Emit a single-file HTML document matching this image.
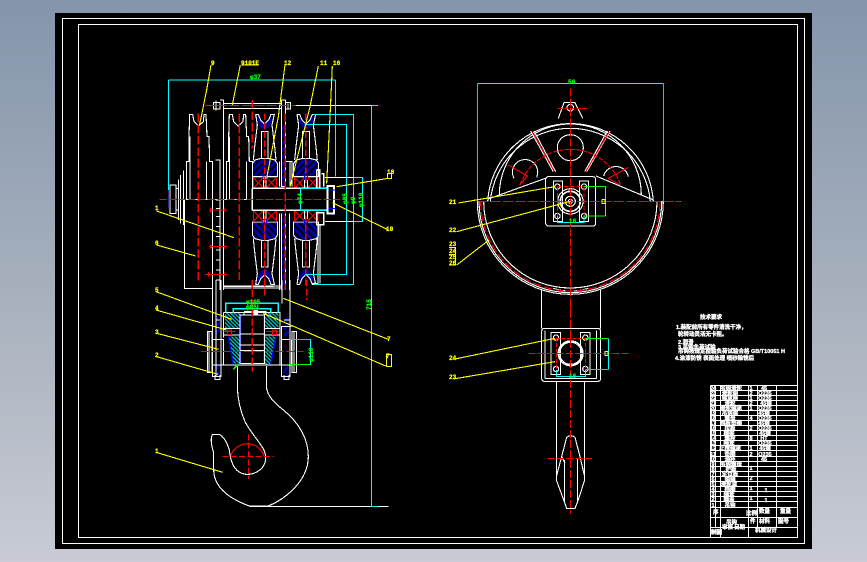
<!DOCTYPE html>
<html><head><meta charset="utf-8"><style>
html,body{margin:0;padding:0;width:867px;height:562px;overflow:hidden;background:linear-gradient(to bottom,#8495ac 0%,#a9b2be 55%,#c8cbd4 100%)}
svg{position:absolute;left:0;top:0}
text{font-family:"Liberation Sans","Noto Sans CJK SC",sans-serif}
.y text{fill:#ff0;stroke:#ff0;stroke-width:.25;font-family:"Liberation Mono",monospace;font-weight:bold;font-size:6px}
text.g{fill:#0f0;stroke:#0f0;stroke-width:.25;font-family:"Liberation Mono",monospace;font-weight:bold;font-size:6px}
.t text{fill:#fff;stroke:#fff;stroke-width:.35;font-size:5.5px;font-weight:bold}
.c text{text-anchor:middle}
</style></head><body>
<svg width="867" height="562" viewBox="0 0 867 562" fill="none" shape-rendering="crispEdges">
<defs>
<pattern id="hb" width="15" height="15" patternUnits="userSpaceOnUse" patternTransform="rotate(45)"><rect width="15" height="15" fill="#000"/><rect width="9" height="15" fill="#00a"/></pattern>
<pattern id="hc" width="8" height="8" patternUnits="userSpaceOnUse" patternTransform="rotate(-45)"><rect width="8" height="8" fill="#000"/><rect width="3.5" height="8" fill="#0bb"/></pattern>
<g id="pu">
<path d="M-19 197L-12 212L0 224L12 212L19 197L22 212L12 232L0 240L-12 232L-22 212Z" fill="#00a"/>
<path d="M-27 193H-19L-12 210L0 222L12 210L19 193H29L22 225L30 290L34 330M-27 193L-22 225L-30 290L-34 330M-10 325V245H10V325" stroke="#fff" stroke-width="3.3"/>
<path d="M-10 325H11L31 330L38 340V380H-37V340L-29 330Z" fill="url(#hb)" stroke="#fff" stroke-width="3.3"/>
<path d="M-34 382H-4V415H-34ZM-34 382L-4 415M-4 382L-34 415M4 382H36V415H4ZM4 382L36 415M36 382L4 415" stroke="#f00" stroke-width="3.3"/>
<path d="M-4 380H4V415H-4Z" stroke="#fff" stroke-width="3.3" fill="#000"/>
<path d="M-5 376H5V388H-5Z" stroke="#00f" stroke-width="3.3"/>
<path d="M0 190V415" stroke="#f00" stroke-width="4.5" stroke-dasharray="20 7"/>
</g>
<g id="pw" stroke="#fff" stroke-width="3.3">
<path d="M0 448V335H7V260L9 193H18L22 215L35 228L50 215L52 193H58L61 260H67L69 335H78V448M10 448V260M60 448V335"/>
</g>
</defs>

<rect x="55" y="13" width="757" height="536" fill="#000"/>
<path d="M62.5 18.5H804.5V543.5H62.5ZM78.5 24.5H797.5V537.5H78.5Z" stroke="#fff"/>

<!-- LEFT VIEW UPPER -->
<g transform="translate(140 50) scale(.33333)">
<use href="#pw" x="140"/>
<use href="#pw" x="259"/>
<path d="M133 448V715H218M133 448H337M218 338V720M226 330H240V720M240 150H250V720M228 450H240M228 475H240M228 500H240M228 530H240M228 560H240M228 600H240M228 630H240M228 660H240M228 690H240" stroke="#fff" stroke-width="3.3"/>
<path d="M250 160H424M250 176H424M250 708H424M250 714H424M467 166H694" stroke="#fff" stroke-width="3.3"/>
<path d="M220 157H240V177H220ZM228 152V182M436 157H452V177H436ZM444 160V175" stroke="#fff" stroke-width="3.3"/>
<path d="M90 405H108V490H90ZM115 388V510M122 375V520M130 362V525M108 415H115M108 480H115" stroke="#fff" stroke-width="3.3"/>
<path d="M88 420V475" stroke="#55f" stroke-width="4.5"/>
<use href="#pu" x="374"/><use href="#pu" x="498"/>
<g transform="translate(0 896) scale(1 -1)"><use href="#pu" x="374"/><use href="#pu" x="498"/></g>
<rect x="424" y="220" width="12" height="190" fill="url(#hb)"/>
<rect x="424" y="490" width="12" height="230" fill="url(#hb)"/>
<path d="M424 150H436V410H424ZM418 410V335M433 335H456V410M450 335V410M424 481H464M418 490V720M424 490V720M436 490V720M448 490V720" stroke="#fff" stroke-width="3.3"/>
<path d="M337 415H560M337 481H560M337 415V481M530 360H540V412M530 360V412M545 372H552V410M530 488H552V525H530Z" stroke="#fff" stroke-width="4.5"/>
<path d="M562 408H582V490H562Z" stroke="#fff" stroke-width="6" fill="#000"/>
<path d="M565 420H585M565 476H585" stroke="#00f" stroke-width="3.3"/>
<path d="M540 700V525M534 525V700H518M250 710H400" stroke="#fff" stroke-width="3.3"/>
<path d="M58 448H600" stroke="#f00" stroke-width="3.3" stroke-dasharray="22 7"/>
<path d="M195 166H465" stroke="#f00" stroke-width="3.3" stroke-dasharray="30 7"/>
<path d="M175 190V695M298 190V690M337 150V295M337 690V720M436 190V720" stroke="#f00" stroke-width="4.5" stroke-dasharray="26 8"/>
<path d="M208 480H262M208 590H262M195 673H262M212 473V487M212 583V597M205 666V680M255 473V487M255 583V597M255 666V680" stroke="#f00" stroke-width="3.3"/>
<rect x="208" y="476" width="8" height="8" fill="#f00"/><rect x="208" y="586" width="8" height="8" fill="#f00"/>
<path d="M85 90H586M85 90V420M586 90V380M694 166V720M694 166H714M520 193H640V703H520M495 224H619V673H495M640 382H668V514H640M481 415V481H560M481 415H562" stroke="#0ff" stroke-width="3.3"/>
<path d="M555 382H640M555 514H640" stroke="#fff" stroke-width="3.3"/>
<g stroke="#ff0" stroke-width="3.3">
<path d="M213 45L200 120L178 228M301 45L277 165M435 45L415 200L380 385M535 48L510 170L450 410M577 48L570 200L560 400M745 385L590 410M745 540L577 458M50 483L282 563M50 585L167 618M305 45H355"/>
</g>
<rect x="742" y="370" width="12" height="16" fill="none" stroke="#ff0" stroke-width="3.3"/>
</g>

<!-- LEFT LOWER -->
<g transform="translate(140 280) scale(.33333)">
<rect x="255" y="97" width="45" height="48" fill="url(#hc)"/><rect x="375" y="97" width="40" height="48" fill="url(#hc)"/>
<path d="M265 170H300V250H280Z" fill="url(#hc)"/><path d="M372 170H408L392 255H372Z" fill="url(#hc)"/>
<rect x="226" y="110" width="14" height="60" fill="url(#hb)"/><rect x="432" y="110" width="14" height="60" fill="url(#hb)"/>
<rect x="226" y="255" width="14" height="40" fill="url(#hb)"/><rect x="432" y="255" width="14" height="40" fill="url(#hb)"/>
<path d="M265 170L280 255M302 100V250M408 170L392 255M372 100V250" stroke="#00f" stroke-width="4.5"/>
<g stroke="#fff" stroke-width="3.3">
<path d="M300 105H373V250H300ZM300 162H373M300 195H373M300 212H373M250 255H425M250 97H420V255M312 97V105M312 95H378V105"/>
<path d="M218 0V290H243V0M228 0V290M426 0V70M450 0V290H425V140M455 140H425M218 178H250V255H218M425 178H455V255H425M250 145H300M375 145H420M250 165H298M375 165H420M250 97V172"/>
<path d="M202 155H216V278H202ZM207 155V278M456 155H470V278H456ZM462 155V278M225 285V298H240V285M432 285V298H447V285M230 120H240M432 120H448"/>
</g>
<path d="M250 155H285M380 155H415" stroke="#f00" stroke-width="3.3"/>
<rect x="262" y="150" width="12" height="14" stroke="#f00" stroke-width="3.3"/><rect x="398" y="150" width="12" height="14" stroke="#f00" stroke-width="3.3"/>
<rect x="340" y="90" width="14" height="14" fill="#fff"/>
<path d="M183 214H490" stroke="#f00" stroke-width="3.3" stroke-dasharray="24 8"/>
<path d="M337 0V275" stroke="#f00" stroke-width="4.5" stroke-dasharray="22 7"/>
<path d="M374 0V50" stroke="#f00" stroke-width="4.5" stroke-dasharray="20 7"/>
<path d="M500 0V60" stroke="#f00" stroke-width="4.5" stroke-dasharray="20 7"/>
<path d="M257 97V70H415V97M280 100V87H392V100" stroke="#0ff" stroke-width="4.5"/>
<path d="M450 178H512V253H450" stroke="#0f0" stroke-width="3.3"/><path d="M512 178V253" stroke="#0ff" stroke-width="3.3"/>
<path d="M280 268L295 252" stroke="#0f0" stroke-width="4.5"/>
<path d="M292 258V320C293 360 300 390 315 425C330 455 355 480 372 510C380 530 378 550 365 565C350 580 325 588 305 580C285 572 272 550 268 510C262 490 250 465 235 463H218C212 470 212 490 220 515L221 570C222 620 265 655 328 678H385C440 655 505 600 505 530C505 480 480 430 430 390C405 370 382 350 379 320V258" stroke="#fff" stroke-width="3.3"/>
<path d="M328 679H746" stroke="#fff" stroke-width="3.3"/>
<path d="M694 0V679" stroke="#0ff" stroke-width="3.3"/>
<path d="M692 679H714" stroke="#0ff" stroke-width="3.3"/>
<path d="M272 529A52 52 0 0 1 372 529" stroke="#f00" stroke-width="3.3"/>
<path d="M325 463V597M247 529H402" stroke="#f00" stroke-width="3.3" stroke-dasharray="18 7"/>
<g stroke="#ff0" stroke-width="3.3">
<path d="M48 35L275 118M48 90L260 150M50 160L236 208M50 230L234 283M48 517L248 577M745 178L430 55M737 258L370 100"/>
</g>
<rect x="739" y="224" width="15" height="36" stroke="#ff0" stroke-width="3.3"/>
</g>

<!-- RIGHT VIEW -->
<g transform="translate(440 70) scale(.33333)">
<g stroke="#fff" stroke-width="3.3">
<path d="M372 98H405L428 145M372 98L355 145"/><circle cx="391" cy="113" r="10"/>
<path d="M143 394A249 249 0 0 1 640 394M151 394A241 241 0 0 1 631 394M178 375A213 213 0 0 1 604 375"/>
<circle cx="391" cy="233" r="39"/>
<path d="M222 325A38 38 0 1 1 290 322M491 318A38 38 0 0 1 565 320"/>
<path d="M272 183L340 305M282 183L347 305M510 183L440 305M502 183L434 305M145 387L316 325M640 390L468 318"/>
<path d="M112 394A279 279 0 0 0 670 394M131 394A260 260 0 0 0 651 394"/>
<path d="M117 394A274 274 0 0 0 665 394"/>
<path d="M112 394H131M651 394H670M340 655Q391 672 445 655"/>
<rect x="317" y="320" width="150" height="148" rx="8" fill="#000"/>
<rect x="340" y="333" width="28" height="122"/><rect x="418" y="333" width="28" height="122"/>
<circle cx="391" cy="394" r="38"/><circle cx="391" cy="394" r="30" stroke-width="5"/><circle cx="391" cy="394" r="15"/><circle cx="391" cy="394" r="6"/>
<circle cx="352" cy="350" r="8"/><circle cx="432" cy="350" r="8"/><circle cx="352" cy="438" r="8"/><circle cx="432" cy="438" r="8"/>
<path d="M305 660V720M481 660V720"/>
</g>
<path d="M277 186L343 305M507 186L437 305" stroke="#f00" stroke-width="3.3"/>
<path d="M240 345A160 160 0 0 1 542 345" stroke="#f00" stroke-width="3.3" stroke-dasharray="14 4"/>
<path d="M205 285L262 318L240 345M565 292L505 325L540 345" stroke="#f00" stroke-width="3.3"/>
<path d="M122 394A269 269 0 0 0 660 394" stroke="#f00" stroke-width="3.3" stroke-dasharray="26 8"/>
<path d="M391 55V720" stroke="#f00" stroke-width="3.3" stroke-dasharray="24 6"/>
<path d="M115 394H725" stroke="#f00" stroke-width="3.3" stroke-dasharray="30 7"/>
<path d="M352 115H443M352 350H432M352 350V438M432 350V438" stroke="#f00" stroke-width="3.3" stroke-dasharray="14 5"/>
<path d="M113 41V394M670 41V394M432 350H496M432 438H496" stroke="#0f0" stroke-width="3.3"/>
<path d="M113 41H670M496 350V438M352 438V457H432V438" stroke="#0ff" stroke-width="3.3"/>
<path d="M55 399L345 350M50 485L391 394M50 585L147 510" stroke="#ff0" stroke-width="3.3"/>
<path d="M27 532H47V585H27M27 553H47" stroke="#ff0" stroke-width="3.3"/>
<rect x="486" y="388" width="9" height="13" stroke="#ff0" stroke-width="3.3"/>
</g>

<g transform="translate(440 300) scale(.33333)">
<g stroke="#fff" stroke-width="3.3">
<path d="M305 0V85M481 0V85"/>
<rect x="305" y="85" width="177" height="159" rx="8" fill="#000"/>
<path d="M315 235H470M315 235V92M470 235V92"/>
<rect x="333" y="97" width="29" height="127"/><rect x="421" y="97" width="29" height="127"/>
<circle cx="392" cy="160" r="37" stroke-width="4.5"/><circle cx="392" cy="160" r="33"/>
<circle cx="348" cy="113" r="8"/><circle cx="436" cy="113" r="8"/><circle cx="348" cy="207" r="8"/><circle cx="436" cy="207" r="8"/>
<path d="M349 244V540L373 605L380 625H405L413 605L434 540V244"/>
<path d="M380 412Q392 402 405 412L420 470L434 530M380 412L365 470L349 530M373 480V605M413 475V605M365 470L375 490"/>
</g>
<path d="M392 0V640" stroke="#f00" stroke-width="3.3" stroke-dasharray="24 6"/>
<path d="M265 160H565M322 475H458" stroke="#f00" stroke-width="3.3" stroke-dasharray="22 6"/>
<path d="M349 113V207M436 113V207M349 115H436" stroke="#f00" stroke-width="3.3" stroke-dasharray="12 4"/>
<path d="M436 115H505M436 208H505" stroke="#0f0" stroke-width="3.3"/>
<path d="M505 115V208M349 210V229H436V210" stroke="#0ff" stroke-width="3.3"/>
<path d="M40 178L345 115M40 237L345 185" stroke="#ff0" stroke-width="3.3"/>
<rect x="495" y="154" width="9" height="13" stroke="#ff0" stroke-width="3.3"/>
</g>

<!-- TITLE TABLE -->
<g stroke="#fff">
<path d="M710.5 385.5H797.5M710.5 390.5H797.5M710.5 395.5H797.5M710.5 400.5H797.5M710.5 405.5H797.5M710.5 410.5H797.5M710.5 415.5H797.5M710.5 420.5H797.5M710.5 425.5H797.5M710.5 430.5H797.5M710.5 435.5H797.5M710.5 440.5H797.5M710.5 445.5H797.5M710.5 450.5H797.5M710.5 456.5H797.5M710.5 461.5H797.5M710.5 466.5H797.5M710.5 471.5H797.5M710.5 476.5H797.5M710.5 481.5H797.5M710.5 486.5H797.5M710.5 491.5H797.5M710.5 496.5H797.5M710.5 501.5H797.5M710.5 507.5H797.5M710.5 517.5H797.5M710.5 527.5H797.5M710.5 537.5H797.5"/>
<path d="M710.5 385.5V537.5M715.5 385.5V527.5M720.5 385.5V537.5M748.5 385.5V537.5M757.5 385.5V527.5M776.5 385.5V527.5"/>
</g>
<g class="t">
<g class="c">
<text x="731" y="390">吊钩滑轮</text><text x="730" y="395">滑轮组</text><text x="730" y="400">轴承座</text><text x="730" y="405">滑轮</text><text x="731" y="410">滑轮轴承</text><text x="730" y="415">吊钩梁</text><text x="730" y="420">螺母</text><text x="731" y="425">挡板垫圈</text><text x="730" y="430">拉板</text><text x="729" y="435">横梁</text><text x="730" y="440">螺栓</text><text x="729" y="445">隔套</text><text x="730" y="450">止推轴承</text><text x="730" y="456">垫圈</text><text x="730" y="461">油杯</text><text x="731" y="466">吊钩螺母</text><text x="731" y="471">护板</text><text x="730" y="476">定位板</text><text x="730" y="481">销轴</text><text x="729" y="486">滑轮罩</text><text x="730" y="491">挡圈</text><text x="729" y="496">轴套</text><text x="729" y="501">端盖</text><text x="730" y="507">吊钩</text>
<text x="764" y="390">45</text><text x="765" y="395">Q235</text><text x="765" y="400">Q235</text><text x="766" y="405">45钢</text><text x="765" y="410">Q235</text><text x="764" y="415">45钢</text><text x="765" y="420">Q235</text><text x="764" y="425">45钢</text><text x="765" y="430">Q235</text><text x="765" y="435">45钢</text><text x="764" y="440">HT</text><text x="765" y="445">Q235</text><text x="765" y="450">45钢</text><text x="765" y="456">Q235</text><text x="764" y="461">45</text><text x="766" y="492">1</text><text x="766" y="502">1</text>
<text x="751" y="390">1</text><text x="751" y="395">2</text><text x="751" y="400">1</text><text x="751" y="405">2</text><text x="751" y="410">1</text><text x="751" y="420">4</text><text x="751" y="430">2</text><text x="751" y="440">8</text><text x="751" y="450">1</text><text x="751" y="456">2</text><text x="751" y="470">1</text><text x="751" y="480">2</text><text x="751" y="490">1</text><text x="751" y="500">1</text>
<text x="713" y="390">24</text><text x="713" y="395">23</text><text x="713" y="400">22</text><text x="713" y="405">21</text><text x="713" y="410">20</text><text x="713" y="415">19</text><text x="713" y="420">18</text><text x="713" y="425">17</text><text x="713" y="430">16</text><text x="713" y="435">15</text><text x="713" y="440">14</text><text x="713" y="445">13</text><text x="713" y="450">12</text><text x="713" y="456">11</text><text x="713" y="461">10</text><text x="713" y="466">9</text><text x="713" y="471">8</text><text x="713" y="476">7</text><text x="713" y="481">6</text><text x="713" y="486">5</text><text x="713" y="491">4</text><text x="713" y="496">3</text><text x="713" y="501">2</text><text x="713" y="507">1</text>
</g>
<text x="713" y="514">序</text><text x="726" y="524">吊钩</text><text x="746" y="515">比例</text><text x="759" y="513">数量</text><text x="780" y="513">重量</text><text x="759" y="523">材料</text><text x="778" y="523">图号</text><text x="750" y="523">件</text>
<text x="711" y="534">制图</text><text x="722" y="529">审核</text><text x="734" y="529">日期</text><text x="755" y="532">机械设计</text>
<text x="700" y="319">技术要求</text>
<text x="676" y="329">1.装配前所有零件清洗干净，</text>
<text x="678" y="336">轮转动灵活无卡阻。</text>
<text x="678" y="344">2.润滑</text>
<text x="678" y="349">3.吊钩负荷试验</text>
<text x="678" y="353">吊钩按规定检验负荷试验合格 GB/T10051 H</text>
<text x="675" y="360">4.涂漆防锈 表面处理 喷砂除锈后</text>
</g>

<!-- labels -->
<g class="y">
<text x="211" y="65">9</text><text x="241" y="65">9101E</text><text x="284" y="65">12</text><text x="320" y="65">11</text><text x="333" y="65">16</text>
<text x="387" y="174">18</text><text x="386" y="231">10</text><text x="155" y="210">1</text><text x="155" y="245">6</text>
<text x="155" y="292">5</text><text x="155" y="310">4</text><text x="155" y="334">3</text><text x="155" y="357">2</text><text x="155" y="453">1</text>
<text x="387" y="341">7</text><text x="386" y="358">7</text>
<text x="449" y="204">21</text><text x="449" y="232">22</text><text x="449" y="246">23</text><text x="449" y="253">24</text><text x="449" y="259">25</text><text x="449" y="265">26</text>
<text x="449" y="360">24</text><text x="449" y="379">23</text>
</g>
<text class="g" x="250" y="79">φ37</text>
<text class="g" x="246" y="304">φ105</text><text class="g" x="246" y="309">φ85L</text>
<text class="g" x="568" y="84">50</text><text class="g" x="569" y="223">16</text><text class="g" x="569" y="378">16</text>
<text class="g" transform="rotate(-90 371 310)" x="371" y="310">715</text>
<text class="g" transform="rotate(-90 313 362)" x="313" y="362">φ110</text>
<text class="g" transform="rotate(-90 302 204)" x="302" y="204">φ74</text>
<text class="g" transform="rotate(-90 347 204)" x="347" y="204">φ85</text>
<text class="g" transform="rotate(-90 355 204)" x="355" y="204">φ9</text>
<text class="g" transform="rotate(-90 363 207)" x="363" y="207">φ110</text>
</svg>
</body></html>
